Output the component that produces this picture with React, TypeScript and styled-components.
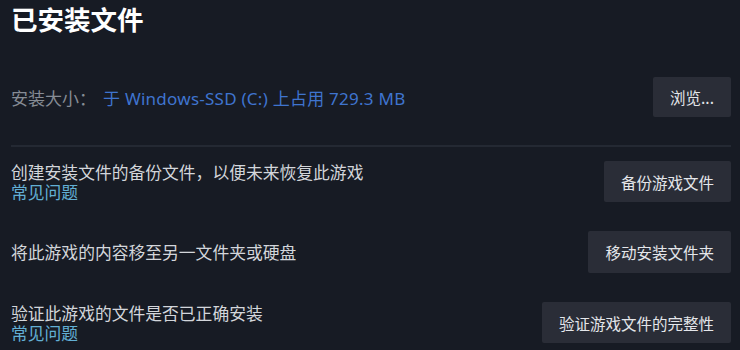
import React from 'react';
import styled, { createGlobalStyle } from 'styled-components';

const GlobalStyle = createGlobalStyle`
    html, body {
        margin: 0;
        padding: 0;
        background: #171b24;
    }
    body {
        font-family: "Noto Sans", "Noto Sans CJK SC", sans-serif;
        color: #d3d6db;
    }
`;

const Page = styled.div`
    width: 740px;
    height: 350px;
    box-sizing: border-box;
    padding: 0 9px 0 11px;
    background: #171b24;
    overflow: hidden;
`;

const Title = styled.h1`
    margin: 0;
    font-size: 26.5px;
    line-height: 38px;
    font-weight: 700;
    color: #ffffff;
    font-family: "Noto Sans CJK SC", sans-serif;
`;

const SizeRow = styled.div`
    display: flex;
    align-items: center;
    justify-content: space-between;
    margin-top: 39px;
    height: 40px;
`;

const SizeInfo = styled.div`
    display: flex;
    align-items: center;
    gap: 7px;
    font-size: 17px;
`;

const Label = styled.span`
    color: #868c95;
    font-family: "Noto Sans CJK SC", sans-serif;
`;

const Value = styled.span`
    color: #3f74cf;
    letter-spacing: 0.25px;
`;

const Divider = styled.hr`
    margin: 28px 0 14px;
    border: none;
    height: 2px;
    background: #242933;
`;

const List = styled.div`
    display: flex;
    flex-direction: column;
    gap: 29px;
`;

const Row = styled.div`
    display: flex;
    align-items: center;
    justify-content: space-between;
    min-height: 41px;
`;

const Texts = styled.div`
    display: flex;
    flex-direction: column;
    font-size: 16.8px;
    line-height: 20px;
    font-family: "Noto Sans CJK SC", sans-serif;
`;

const Description = styled.span`
    color: #d3d6db;
`;

const Link = styled.a`
    color: #62afd4;
    cursor: pointer;
`;

const Button = styled.button<{ $h?: number }>`
    height: ${p => p.$h ?? 41}px;
    padding: 0 17px;
    border: none;
    border-radius: 2px;
    background: #2a2d37;
    color: #e4e6ea;
    font-family: "Noto Sans CJK SC", sans-serif;
    font-size: 15.5px;
    cursor: pointer;
    flex-shrink: 0;
`;

const actions = [
    { text: '创建安装文件的备份文件，以便未来恢复此游戏', faq: true, button: '备份游戏文件', h: 41 },
    { text: '将此游戏的内容移至另一文件夹或硬盘', faq: false, button: '移动安装文件夹', h: 42 },
    { text: '验证此游戏的文件是否已正确安装', faq: true, button: '验证游戏文件的完整性', h: 41 },
];

const App = () => (
    <>
        <GlobalStyle />
        <Page>
            <Title>已安装文件</Title>
            <SizeRow>
                <SizeInfo>
                    <Label>安装大小：</Label>
                    <Value>于 Windows-SSD (C:) 上占用 729.3 MB</Value>
                </SizeInfo>
                <Button $h={40}>浏览...</Button>
            </SizeRow>
            <Divider />
            <List>
                {actions.map(a => (
                    <Row key={a.button}>
                        <Texts>
                            <Description>{a.text}</Description>
                            {a.faq && <Link>常见问题</Link>}
                        </Texts>
                        <Button $h={a.h}>{a.button}</Button>
                    </Row>
                ))}
            </List>
        </Page>
    </>
);

export default App;
